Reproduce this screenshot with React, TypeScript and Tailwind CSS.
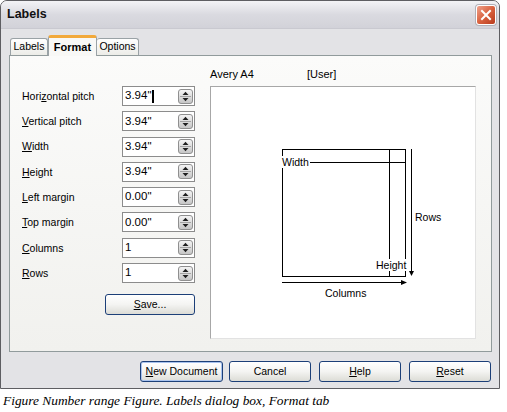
import React from "react";

const ui: React.CSSProperties = { fontFamily: '"Liberation Sans", Arial, sans-serif' };

function Spin() {
  return (
    <svg width="15" height="15" viewBox="0 0 15 15" className="shrink-0">
      <defs>
        <linearGradient id="spg" x1="0" y1="0" x2="0" y2="1">
          <stop offset="0" stopColor="#f6f6f6" />
          <stop offset="1" stopColor="#c4c4c4" />
        </linearGradient>
      </defs>
      <rect x="0.5" y="0.5" width="14" height="14" rx="2.5" fill="url(#spg)" stroke="#8f8f8f" />
      <line x1="2" y1="7.5" x2="13" y2="7.5" stroke="#a3a3a3" />
      <path d="M4.5 6 L7.5 2.8 L10.5 6 Z" fill="#1e1e1e" />
      <path d="M4.5 9 L7.5 12.2 L10.5 9 Z" fill="#1e1e1e" />
    </svg>
  );
}

function Field({ label, value, cursor }: { label: React.ReactNode; value: string; cursor?: boolean }) {
  return (
    <div className="flex items-center h-[20px]">
      <div className="w-[100px] text-[10.5px] text-black leading-none">{label}</div>
      <div className="w-[73px] h-[20px] border border-[#8c8c8c] bg-white flex items-center pl-[2px] pr-[1px]">
        <span className="flex-1 flex items-center text-[11.5px] leading-none text-black">
          {value}
          {cursor && <span className="inline-block w-[2px] h-[13px] bg-black ml-[1px]" />}
        </span>
        <Spin />
      </div>
    </div>
  );
}

function Btn({ children, w, def }: { children: React.ReactNode; w: string; def?: boolean }) {
  return (
    <div
      className={`${w} h-[21px] rounded-[3px] border border-[#1c3f78] bg-gradient-to-b from-white via-[#f4f4f2] to-[#dcdcd6] flex items-center justify-center text-[10.5px] text-black ${def ? "shadow-[inset_0_0_0_1px_#a9c3ee]" : ""}`}
    >
      {children}
    </div>
  );
}

export default function App() {
  return (
    <div className="w-[507px] h-[412px] bg-white relative overflow-hidden" style={ui}>
      <div className="w-[500px] h-[389px] flex flex-col border border-[#5e5e62] rounded-t-[7px] bg-[#e3e3e6] overflow-hidden">
        {/* Title bar */}
        <div className="h-[28px] shrink-0 flex items-center justify-between pl-[6px] pr-[3px] bg-gradient-to-b from-[#f3f3f6] via-[#dadae0] to-[#d2d2d9] border-b border-[#c9c9d0]">
          <span className="text-[12.5px] font-bold text-[#111]">Labels</span>
          <div className="w-[20px] h-[20px] rounded-[3px] border border-white bg-gradient-to-br from-[#eea08a] via-[#d9623f] to-[#b83a1c] flex items-center justify-center shadow-[0_0_0_1px_#b0b0b8]">
            <svg width="12" height="12" viewBox="0 0 12 12">
              <path d="M2 2 L10 10 M10 2 L2 10" stroke="white" strokeWidth="2" strokeLinecap="square" />
            </svg>
          </div>
        </div>

        {/* Body */}
        <div className="flex-1 pt-[6px] pl-[8px]">
          {/* Tabs */}
          <div className="flex items-end h-[20px] pl-[1px]">
            <div className="w-[38px] h-[17px] border border-b-0 border-[#9aa2a6] rounded-t-[3px] bg-gradient-to-b from-white to-[#ecece8] flex items-center justify-center text-[10.5px] text-black">
              Labels
            </div>
            <div className="relative z-10 w-[49px] h-[21px] -mb-px rounded-t-[3px] border-x border-[#9aa2a6] border-t-[3px] border-t-[#f2a93b] bg-[#f8f8f6] flex items-center justify-center text-[11px] font-bold text-black">
              Format
            </div>
            <div className="w-[42px] h-[17px] border border-b-0 border-l-0 border-[#9aa2a6] rounded-t-[3px] bg-gradient-to-b from-white to-[#ecece8] flex items-center justify-center text-[10.5px] text-black">
              Options
            </div>
          </div>

          {/* Panel */}
          <div className="w-[483px] h-[297px] border border-[#919b9c] bg-gradient-to-b from-[#fbfbfa] to-[#f1f1ee] flex">
            {/* Left column */}
            <div className="pl-[12px] pt-[30px] flex flex-col">
              <div className="flex flex-col gap-[5.3px]">
                <Field label={<>Hori<span className="underline">z</span>ontal pitch</>} value={'3.94"'} cursor />
                <Field label={<><span className="underline">V</span>ertical pitch</>} value={'3.94"'} />
                <Field label={<><span className="underline">W</span>idth</>} value={'3.94"'} />
                <Field label={<><span className="underline">H</span>eight</>} value={'3.94"'} />
                <Field label={<><span className="underline">L</span>eft margin</>} value={'0.00"'} />
                <Field label={<><span className="underline">T</span>op margin</>} value={'0.00"'} />
                <Field label={<><span className="underline">C</span>olumns</>} value="1" />
                <Field label={<><span className="underline">R</span>ows</>} value="1" />
              </div>
              <div className="flex justify-end mt-[11px]">
                <Btn w="w-[90px]">
                  <span><span className="underline">S</span>ave...</span>
                </Btn>
              </div>
            </div>

            {/* Right column */}
            <div className="pl-[15px] pt-[12px] flex flex-col">
              <div className="flex h-[13px] items-center text-[11px] text-black leading-none">
                <span className="w-[97px]">Avery A4</span>
                <span>[User]</span>
              </div>
              <div className="mt-[5px] w-[266px] h-[253px] border border-[#a7a7a7] border-r-[#e2e2e2] border-b-[#e2e2e2] bg-white">
                <div className="relative w-[264px] h-[251px]">
                  <svg width="264" height="251" className="absolute left-0 top-0">
                    <rect x="71.5" y="62.5" width="123" height="127" fill="none" stroke="black" />
                    <line x1="178.5" y1="62" x2="178.5" y2="190" stroke="black" />
                    <line x1="71" y1="75.5" x2="195" y2="75.5" stroke="black" />
                    <line x1="200.5" y1="62" x2="200.5" y2="185" stroke="black" />
                    <path d="M198 184 L203 184 L200.5 189 Z" fill="black" />
                    <line x1="71" y1="195.5" x2="192" y2="195.5" stroke="black" />
                    <path d="M190 193 L196 195.5 L190 198 Z" fill="black" />
                  </svg>
                  <span className="absolute left-[71px] top-[69px] h-[12px] bg-white text-[10.5px] leading-[12px] text-black pr-[1px]">
                    Width
                  </span>
                  <span className="absolute left-[165px] top-[172px] h-[12px] bg-white text-[10.5px] leading-[12px] text-black">
                    Height
                  </span>
                  <span className="absolute left-[204px] top-[124px] text-[10.5px] leading-[12px] text-black">Rows</span>
                  <span className="absolute left-[114px] top-[200px] text-[10.5px] leading-[12px] text-black">Columns</span>
                </div>
              </div>
            </div>
          </div>

          {/* Buttons */}
          <div className="w-[483px] flex justify-end pr-[1px] mt-[9px]">
            <Btn w="w-[83px]" def>
              <span><span className="underline">N</span>ew Document</span>
            </Btn>
            <div className="ml-[6px]">
              <Btn w="w-[82px]">Cancel</Btn>
            </div>
            <div className="ml-[8px]">
              <Btn w="w-[82px]">
                <span><span className="underline">H</span>elp</span>
              </Btn>
            </div>
            <div className="ml-[8px]">
              <Btn w="w-[82px]">
                <span><span className="underline">R</span>eset</span>
              </Btn>
            </div>
          </div>
        </div>
      </div>
      <div
        className="pl-[3px] mt-[3px] text-[13.4px] leading-[18px] italic text-black"
        style={{ fontFamily: '"Liberation Serif", "Times New Roman", serif' }}
      >
        Figure Number range Figure. Labels dialog box, Format tab
      </div>
    </div>
  );
}
